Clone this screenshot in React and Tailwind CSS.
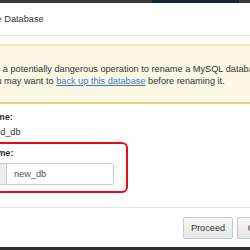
export default function App() {
    return (
        <div className="w-[250px] h-[250px] overflow-hidden bg-[#2e2e2e] flex flex-col font-['Liberation_Sans',Arial,sans-serif] text-[9.2px] leading-[12px] text-[#333]">
            {/* dimmed page behind the dialog */}
            <div className="h-[3px] flex shrink-0">
                <div className="w-[152px] bg-[#3b3b3b]" />
                <div className="w-[87px] bg-[#14263a]" />
                <div className="flex-1 bg-[#3b3b3b]" />
            </div>

            <div className="h-[244px] bg-white flex flex-col shrink-0">
                <div className="h-[33px] shrink-0 flex items-center border-b border-[#e5e5e5] whitespace-nowrap">
                    <span className="-ml-[33px]">Rename Database</span>
                </div>

                <div className="pt-[8px] flex flex-col whitespace-nowrap">
                    <div className="bg-[#fcf8e3] border-t-2 border-b-2 border-t-[#f8e6a6] border-b-[#f0cd6a] pt-[17px] pb-[15px]">
                        <div className="-ml-[14px]">
                            <p>It is a potentially dangerous operation to rename a MySQL database.</p>
                            <p>
                                You may want to{' '}
                                <a href="#" className="text-[#3a7ab8] underline">back up this database</a>{' '}
                                before renaming it.
                            </p>
                        </div>
                    </div>

                    <p className="mt-[7px] -ml-[51px] font-bold">Current Name:</p>
                    <p className="mt-[3px] -ml-[7px]">old_db</p>

                    <div className="mt-[4px] -ml-[60px] w-[188px] border-2 border-[#ee0a12] rounded-[6px] pl-[22px] pr-[12px] pt-[3px] pb-[6px]">
                        <label className="block font-bold">New Name:</label>
                        <div className="mt-[4px] flex h-[22px]">
                            <span className="w-[43px] bg-[#eeeeee] border border-[#cccccc] rounded-l-[2px]" />
                            <input
                                defaultValue="new_db"
                                className="flex-1 min-w-0 border border-l-0 border-[#cccccc] rounded-r-[2px] pl-[7px] text-[9.2px] text-[#555] outline-none"
                            />
                        </div>
                    </div>
                </div>

                <div className="mt-[14px] border-t border-[#e5e5e5] pt-[9px] flex gap-[4px] whitespace-nowrap">
                    <button className="ml-[183px] h-[22px] w-[50px] shrink-0 border border-[#c8c8c8] rounded-[2px] bg-gradient-to-b from-[#f7f7f7] to-[#e6e6e6] text-[#333]">
                        Proceed
                    </button>
                    <button className="h-[22px] w-[50px] shrink-0 border border-[#c8c8c8] rounded-[2px] bg-gradient-to-b from-[#f7f7f7] to-[#e6e6e6] text-[#333]">
                        Cancel
                    </button>
                </div>
            </div>
        </div>
    );
}
